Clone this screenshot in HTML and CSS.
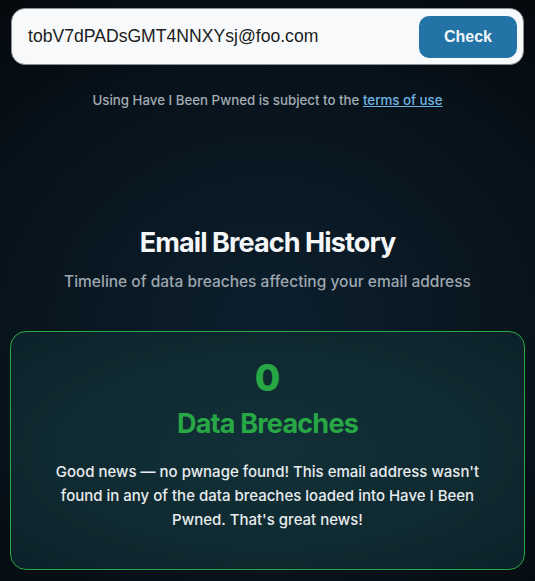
FILE: index.html
```html
<!DOCTYPE html>
<html lang="en">
<head>
  <meta charset="UTF-8">
  <meta name="viewport" content="width=device-width, initial-scale=1.0">
  <title>Have I Been Pwned</title>
  <link rel="stylesheet" href="styles.css">
</head>
<body>
  <div class="page">
    <form class="search">
      <input class="search-input" type="text" value="tobV7dPADsGMT4NNXYsj@foo.com">
      <button type="button" class="search-btn">Check</button>
    </form>
    <p class="terms">Using Have I Been Pwned is subject to the <a href="#">terms of use</a></p>

    <div class="history">
      <h2>Email Breach History</h2>
      <p class="sub">Timeline of data breaches affecting your email address</p>
    </div>

    <div class="result">
      <div class="count">0</div>
      <div class="label">Data Breaches</div>
      <p class="msg">Good news — no pwnage found! This email address wasn't found in any of the data breaches loaded into Have I Been Pwned. That's great news!</p>
    </div>
  </div>
</body>
</html>
```

FILE: styles.css
```css
html, body {
  margin: 0;
  height: 100%;
}

body {
  font-family: Inter, "Noto Sans", sans-serif;
  color: #e9edf1;
  background: radial-gradient(ellipse 90% 70% at 50% 55%, #0c1f2d 0%, #08141d 55%, #04080c 100%);
  background-color: #04080c;
}

.page {
  padding: 8px 10px 0 10px;
}

/* Search bar */
.search {
  display: flex;
  align-items: center;
  background: #f8f9fb;
  border: 1px solid #8a9098;
  border-radius: 14px;
  height: 55px;
  padding: 0 6px 0 16px;
  margin: 0 1px;
}

.search-input {
  flex: 1;
  border: none;
  background: transparent;
  font-family: "Liberation Sans", Arial, sans-serif;
  font-size: 17.6px;
  color: #1a1d21;
  outline: none;
  padding: 0;
}

.search-btn {
  width: 98px;
  height: 42px;
  border: none;
  border-radius: 10px;
  background: #2373a7;
  color: #f2f6fa;
  font-family: "Liberation Sans", Arial, sans-serif;
  font-weight: bold;
  font-size: 16px;
  cursor: pointer;
}

.terms {
  text-align: center;
  font-size: 13.3px;
  font-weight: 500;
  color: #a3abb3;
  margin: 27px 0 0 0;
}

.terms a {
  color: #6fb3e3;
}

/* Heading */
.history {
  text-align: center;
  margin-top: 118px;
}

.history h2 {
  margin: 0;
  font-size: 27px;
  font-weight: 700;
  letter-spacing: -0.9px;
  color: #f4f6f8;
}

.sub {
  margin: 13px 0 0 0;
  font-size: 15.5px;
  font-weight: 500;
  color: #9ea7b0;
}

/* Result card */
.result {
  margin-top: 40px;
  border: 1px solid #2aa844;
  border-radius: 16px;
  background: radial-gradient(ellipse at 50% 50%, #123038 0%, #0f2a30 60%, #0c2129 100%);
  text-align: center;
  padding: 24px 40px 36px 40px;
  height: 177px;
}

.count {
  font-size: 37px;
  font-weight: 800;
  color: #28a745;
  line-height: 44px;
}

.label {
  font-size: 27px;
  font-weight: 700;
  letter-spacing: -0.8px;
  color: #28a745;
  line-height: 34px;
  margin-top: 7px;
}

.msg {
  margin: 19px 0 0 0;
  font-size: 15px;
  font-weight: 500;
  line-height: 24px;
  color: #e8ecef;
}
```
